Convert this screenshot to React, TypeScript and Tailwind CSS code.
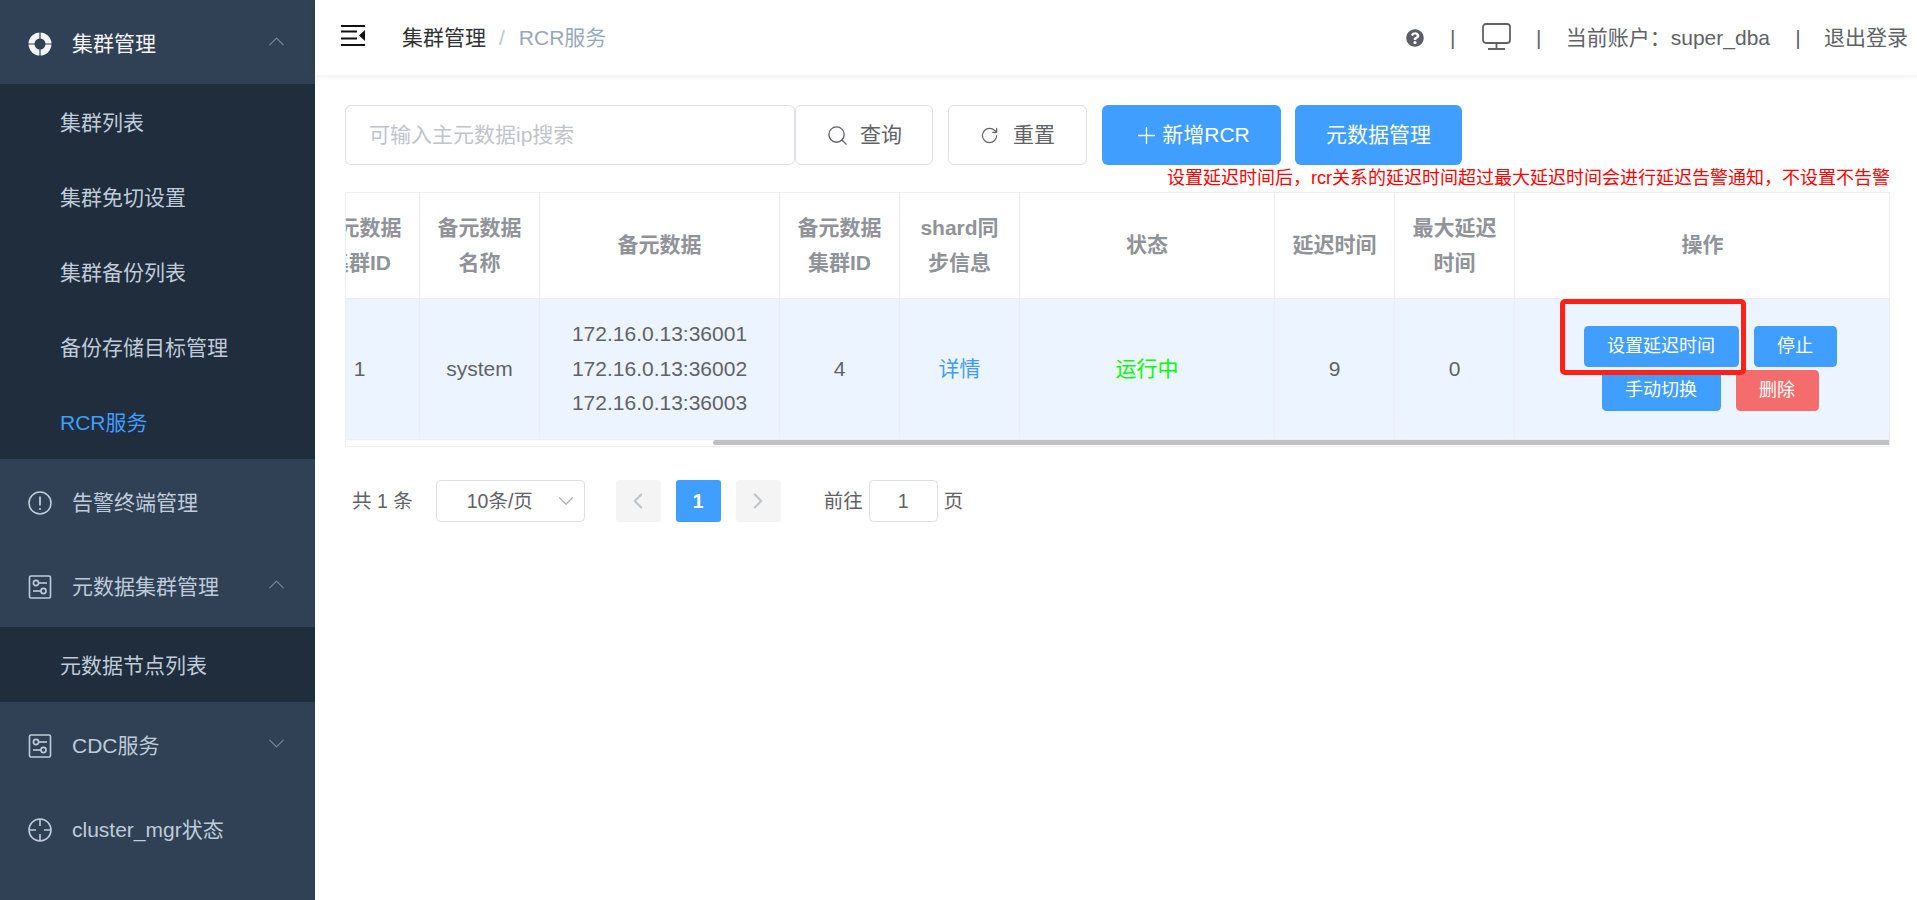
import { Search, RotateCw, Plus, ChevronDown, ChevronLeft, ChevronRight, ChevronUp } from 'lucide-react';
import { FaQuestionCircle } from 'react-icons/fa';
import type { ReactNode } from 'react';

function ClusterIcon() {
  return (
    <svg width="24" height="24" viewBox="0 0 24 24" className="block">
      <circle cx="12" cy="12" r="11.5" fill="#f4f4f5" />
      <path d="M12 0v24M0 12h24" stroke="#304156" strokeWidth="1.2" />
      <circle cx="12" cy="12" r="5.5" fill="#304156" />
    </svg>
  );
}

function AlertIcon() {
  return (
    <svg width="24" height="24" viewBox="0 0 24 24" fill="none" stroke="#bfcbd9" className="block">
      <circle cx="12" cy="12" r="11" strokeWidth="1.6" />
      <path d="M12 5.5v9" strokeWidth="1.8" />
      <circle cx="12" cy="18" r="1.1" fill="#bfcbd9" stroke="none" />
    </svg>
  );
}

function SlidersIcon() {
  return (
    <svg width="24" height="24" viewBox="0 0 24 24" fill="none" stroke="#bfcbd9" strokeWidth="1.6" className="block">
      <rect x="1.5" y="1" width="21" height="22" rx="1.5" />
      <circle cx="8" cy="8" r="2.6" />
      <path d="M10.6 8H19" />
      <circle cx="15.5" cy="16" r="2.6" />
      <path d="M5 16h7.9" />
    </svg>
  );
}

function TargetIcon() {
  return (
    <svg width="24" height="24" viewBox="0 0 24 24" fill="none" stroke="#bfcbd9" strokeWidth="1.6" className="block">
      <circle cx="12" cy="12" r="11" />
      <path d="M12 1v7M12 16v7M1 12h7M16 12h7" />
    </svg>
  );
}

function HamburgerIcon() {
  return (
    <svg width="24" height="21" viewBox="0 0 24 21" className="block">
      <path d="M0 1h24M0 6.5h16M0 13.5h16M0 20h24" stroke="#111" strokeWidth="2" />
      <path d="M24 5v11l-6-5.5z" fill="#111" />
    </svg>
  );
}

function MonitorIcon() {
  return (
    <svg width="29" height="27" viewBox="0 0 29 27" fill="none" stroke="#606266" strokeWidth="1.8" className="block">
      <rect x="1" y="1" width="27" height="19" rx="3" />
      <path d="M14.5 20v6M6 26h17" />
    </svg>
  );
}

function MenuGroup({ icon, label, open, active }: { icon: ReactNode; label: string; open?: boolean; active?: boolean }) {
  return (
    <div className={`flex items-center h-[84px] pt-[3px] pl-[28px] pr-[31px] text-[21px] ${active ? 'text-[#f4f4f5]' : 'text-[#bfcbd9]'}`}>
      {icon}
      <span className="ml-[20px]">{label}</span>
      {open === true && <ChevronUp size={27} strokeWidth={0.9} className="ml-auto -mr-[6px] -mt-[5px] text-[#7f8a99]" />}
      {open === false && <ChevronDown size={27} strokeWidth={0.9} className="ml-auto -mr-[6px] -mt-[5px] text-[#7f8a99]" />}
    </div>
  );
}

function SubItem({ label, active }: { label: string; active?: boolean }) {
  return (
    <div className={`flex items-center h-[75px] pt-[3px] pl-[60px] bg-[#1f2d3d] text-[21px] ${active ? 'text-[#409eff]' : 'text-[#bfcbd9]'}`}>
      {label}
    </div>
  );
}

function Sidebar() {
  return (
    <aside className="w-[315px] shrink-0 bg-[#304156]">
      <MenuGroup icon={<ClusterIcon />} label="集群管理" open active />
      <SubItem label="集群列表" />
      <SubItem label="集群免切设置" />
      <SubItem label="集群备份列表" />
      <SubItem label="备份存储目标管理" />
      <SubItem label="RCR服务" active />
      <MenuGroup icon={<AlertIcon />} label="告警终端管理" />
      <MenuGroup icon={<SlidersIcon />} label="元数据集群管理" open />
      <SubItem label="元数据节点列表" />
      <MenuGroup icon={<SlidersIcon />} label="CDC服务" open={false} />
      <MenuGroup icon={<TargetIcon />} label="cluster_mgr状态" />
    </aside>
  );
}

function Topbar() {
  return (
    <header className="flex items-center h-[75px] pl-[26px] pr-[9px] bg-white shadow-[0_1px_6px_rgba(0,21,41,0.08)] text-[21px]">
      <div className="-mt-[5px]"><HamburgerIcon /></div>
      <span className="ml-[37px] text-[#303133]">集群管理</span>
      <span className="ml-[13px] text-[#c0c4cc]">/</span>
      <span className="ml-[14px] text-[#97a8be]">RCR服务</span>
      <div className="ml-auto flex items-center text-[#606266]">
        <FaQuestionCircle size={18} className="text-[#5a5e66]" />
        <span className="ml-[26px] w-[6px] text-center">|</span>
        <div className="ml-[26px] -mt-[3px]"><MonitorIcon /></div>
        <span className="ml-[25px] w-[6px] text-center">|</span>
        <span className="ml-[24px]">当前账户：super_dba</span>
        <span className="ml-[25px] w-[6px] text-center">|</span>
        <span className="ml-[23px]">退出登录</span>
      </div>
    </header>
  );
}

function Toolbar() {
  return (
    <div className="flex items-center">
      <input
        readOnly
        placeholder="可输入主元数据ip搜索"
        className="w-[450px] h-[60px] pl-[23px] border border-[#dcdfe6] rounded-[6px] text-[21px] outline-none placeholder:text-[#c0c4cc]"
      />
      <button className="flex items-center justify-center w-[138px] h-[60px] border border-[#dcdfe6] rounded-[6px] text-[21px] text-[#606266]">
        <Search size={23} strokeWidth={1.4} />
        <span className="ml-[11px]">查询</span>
      </button>
      <button className="flex items-center justify-center w-[139px] h-[60px] ml-[15px] border border-[#dcdfe6] rounded-[6px] text-[21px] text-[#606266]">
        <RotateCw size={19} strokeWidth={1.5} />
        <span className="ml-[14px]">重置</span>
      </button>
      <button className="flex items-center justify-center w-[179px] h-[60px] ml-[15px] rounded-[6px] bg-[#409eff] text-[21px] text-white">
        <Plus size={27} strokeWidth={1.2} />
        <span className="ml-[2px]">新增RCR</span>
      </button>
      <button className="flex items-center justify-center w-[167px] h-[60px] ml-[14px] rounded-[6px] bg-[#409eff] text-[21px] text-white">
        元数据管理
      </button>
    </div>
  );
}

const headCell = 'h-[106px] border-r border-b border-[#ebeef5] text-[21px] leading-[34.5px] font-bold text-[#909399] text-center align-middle';
const bodyCell = 'h-[140px] border-r border-[#ebeef5] text-[21px] leading-[34.5px] text-[#606266] text-center align-middle';

function RowButton({ label, danger }: { label: string; danger?: boolean }) {
  return (
    <button className={`h-[41px] ml-[15px] px-[23.5px] rounded-[4.5px] text-[18px] text-white ${danger ? 'bg-[#f56c6c]' : 'bg-[#409eff]'}`}>
      {label}
    </button>
  );
}

function RcrTable() {
  return (
    <div className="overflow-hidden border-t border-l border-r border-[#ebeef5]">
      <table className="table-fixed w-[1591px] -ml-[46px] border-separate border-spacing-0">
        <colgroup>
          <col className="w-[120px]" />
          <col className="w-[120px]" />
          <col className="w-[240px]" />
          <col className="w-[120px]" />
          <col className="w-[120px]" />
          <col className="w-[255px]" />
          <col className="w-[120px]" />
          <col className="w-[120px]" />
          <col className="w-[376px]" />
        </colgroup>
        <thead>
          <tr>
            <th className={headCell}>主元数据<br />集群ID</th>
            <th className={headCell}>备元数据<br />名称</th>
            <th className={headCell}>备元数据</th>
            <th className={headCell}>备元数据<br />集群ID</th>
            <th className={headCell}>shard同<br />步信息</th>
            <th className={headCell}>状态</th>
            <th className={headCell}>延迟时间</th>
            <th className={headCell}>最大延迟<br />时间</th>
            <th className={headCell}>操作</th>
          </tr>
        </thead>
        <tbody>
          <tr className="bg-[#ecf5ff]">
            <td className={bodyCell}>1</td>
            <td className={bodyCell}>system</td>
            <td className={bodyCell}>172.16.0.13:36001<br />172.16.0.13:36002<br />172.16.0.13:36003</td>
            <td className={bodyCell}>4</td>
            <td className={bodyCell}><span className="text-[#409eff]">详情</span></td>
            <td className={bodyCell}><span className="text-[#00ff00]">运行中</span></td>
            <td className={bodyCell}>9</td>
            <td className={bodyCell}>0</td>
            <td className={`${bodyCell} relative`}>
              <div className="flex flex-wrap justify-center gap-y-[3px] pb-[2px]">
                <RowButton label="设置延迟时间" />
                <RowButton label="停止" />
                <RowButton label="手动切换" />
                <RowButton label="删除" danger />
              </div>
              <div className="absolute left-[45px] top-0 w-[186px] h-[76px] border-[5px] border-[#ff2016] rounded-[5px]" />
            </td>
          </tr>
        </tbody>
      </table>
      <div className="flex h-[8px] border-t border-b border-[#ebeef5]">
        <div className="h-[5px] ml-[367px] flex-1 rounded-l-[3px] bg-[#c1c1c1]" />
      </div>
    </div>
  );
}

function Pagination() {
  return (
    <div className="flex items-center h-[42px] mt-[33px] pl-[7px] text-[19.5px] text-[#606266]">
      <span className="pt-[2px]">共 1 条</span>
      <div className="flex items-center justify-between w-[149px] h-[42px] ml-[23px] pl-[30px] pr-[5px] border border-[#dcdfe6] rounded-[4.5px]">
        <span className="pt-[2px]">10条/页</span>
        <ChevronDown size={26} strokeWidth={1} className="text-[#a8abb2]" />
      </div>
      <div className="flex items-center justify-center w-[45px] h-[42px] ml-[31px] rounded-[3px] bg-[#f4f4f5] text-[#c0c4cc]">
        <ChevronLeft size={26} strokeWidth={2} />
      </div>
      <div className="flex items-center justify-center w-[45px] h-[42px] pt-[2px] ml-[15px] rounded-[3px] bg-[#409eff] font-bold text-white">1</div>
      <div className="flex items-center justify-center w-[45px] h-[42px] ml-[15px] rounded-[3px] bg-[#f4f4f5] text-[#c0c4cc]">
        <ChevronRight size={26} strokeWidth={2} />
      </div>
      <span className="ml-[43px] pt-[2px]">前往</span>
      <div className="flex items-center justify-center w-[69px] h-[42px] pt-[2px] ml-[6px] border border-[#dcdfe6] rounded-[4.5px]">1</div>
      <span className="ml-[6px] pt-[2px]">页</span>
    </div>
  );
}

export default function App() {
  return (
    <div className="flex h-[900px] overflow-hidden bg-white font-['Liberation_Sans','Noto_Sans_CJK_SC',sans-serif]">
      <Sidebar />
      <main className="flex-1 min-w-0">
        <Topbar />
        <div className="pt-[30px] pl-[30px] pr-[27px]">
          <Toolbar />
          <p className="text-right text-[18px] leading-[27px] text-[#ff0000]">
            设置延迟时间后，rcr关系的延迟时间超过最大延迟时间会进行延迟告警通知，不设置不告警
          </p>
          <RcrTable />
          <Pagination />
        </div>
      </main>
    </div>
  );
}
